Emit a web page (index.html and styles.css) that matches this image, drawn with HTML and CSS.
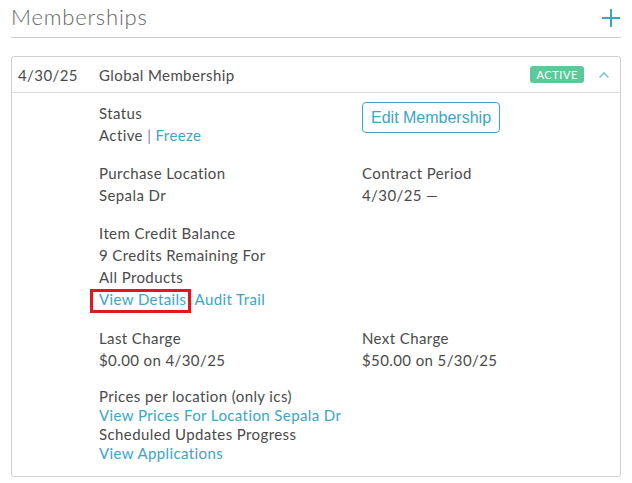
FILE: index.html
```html
<!DOCTYPE html>
<html>
<head>
<meta charset="utf-8">
<link rel="stylesheet" href="styles.css">
</head>
<body>
<div class="page">
  <div class="page-header">
    <h1 class="title">Memberships</h1>
    <svg class="add-icon" width="18" height="18" viewBox="0 0 18 18"><path d="M9 0V18M0 9H18" stroke="#3aa5c4" stroke-width="2"/></svg>
  </div>
  <div class="card">
    <div class="card-head">
      <span class="date">4/30/25</span>
      <span class="name">Global Membership</span>
      <span class="badge">ACTIVE</span>
      <svg class="chevron" width="12" height="8" viewBox="0 0 12 8"><path d="M1.5 6.5L6 2L10.5 6.5" fill="none" stroke="#7cc3da" stroke-width="1.6"/></svg>
    </div>
    <div class="card-body">
      <div class="grid">
        <div class="field">
          <div class="label">Status</div>
          <div class="value">Active <span class="sep">|</span> <a class="link">Freeze</a></div>
        </div>
        <div class="field">
          <button class="btn">Edit Membership</button>
        </div>
        <div class="field">
          <div class="label">Purchase Location</div>
          <div class="value">Sepala Dr</div>
        </div>
        <div class="field">
          <div class="label">Contract Period</div>
          <div class="value">4/30/25 —</div>
        </div>
        <div class="field">
          <div class="label">Item Credit Balance</div>
          <div class="value">9 Credits Remaining For All Products</div>
          <div class="value nowrap"><a class="link highlight">View Details</a> <a class="link audit">Audit Trail</a></div>
        </div>
        <div class="field"></div>
        <div class="field row-last">
          <div class="label">Last Charge</div>
          <div class="value">$0.00 on 4/30/25</div>
        </div>
        <div class="field row-last">
          <div class="label">Next Charge</div>
          <div class="value">$50.00 on 5/30/25</div>
        </div>
      </div>
      <div class="extra">
        <div class="label">Prices per location (only ics)</div>
        <div><a class="link">View Prices For Location Sepala Dr</a></div>
        <div class="label">Scheduled Updates Progress</div>
        <div><a class="link">View Applications</a></div>
      </div>
    </div>
  </div>
</div>
</body>
</html>
```
FILE: styles.css
```css
* { box-sizing: border-box; }
html, body { margin: 0; padding: 0; background: #fff; }
body {
  font-family: "Lato", "Open Sans", sans-serif;
  font-size: 15px;
  letter-spacing: 0.4px;
  color: #4a4a4a;
}
.page { padding: 0 11px; }
.page-header {
  display: flex;
  align-items: center;
  justify-content: space-between;
  height: 38px;
  border-bottom: 1px solid #cfcfcf;
}
.title {
  margin: 0;
  font-weight: 300;
  font-size: 22px;
  letter-spacing: 0.8px;
  color: #666;
  line-height: 30px;
  margin-top: -4px;
}
.add-icon { margin-right: 1px; margin-top: -2px; }
.card {
  margin-top: 18px;
  border: 1px solid #cfcfcf;
  border-radius: 3px;
}
.card-head {
  display: flex;
  align-items: center;
  height: 36px;
  padding: 0 10px 0 6px;
  border-bottom: 1px solid #dcdcdc;
}
.date { width: 81px; }
.name { flex: 1; }
.badge {
  background: #5cc99b;
  color: #fff;
  font-size: 11px;
  padding: 0 6px;
  height: 17px;
  line-height: 17px;
  border-radius: 3px;
  margin-right: 14px;
  letter-spacing: 0.6px;
}
.chevron { display: block; }
.card-body {
  padding: 9px 10px 13px 87px;
}
.grid {
  display: grid;
  grid-template-columns: 180px 1fr;
  column-gap: 83px;
  row-gap: 16px;
}
.field { line-height: 22px; }
.row-last { margin-top: 1px; }
.nowrap { white-space: nowrap; }
.label { color: #4a4a4a; }
.link { color: #3aa5c4; cursor: pointer; }
.audit { margin-left: 4px; }
.sep { color: #8a7aa0; }
.btn {
  font-family: "Liberation Sans", Arial, sans-serif;
  font-size: 16px;
  letter-spacing: 0;
  color: #3aa5c4;
  background: #fff;
  border: 1px solid #3aa5c4;
  border-radius: 4px;
  height: 31px;
  padding: 0 8px;
  display: block;
}
.highlight {
  position: relative;
}
.highlight::after {
  content: "";
  position: absolute;
  left: -9px;
  right: -5px;
  top: -1px;
  bottom: -5px;
  border: 3px solid #e3161e;
}
.extra {
  margin-top: 16px;
  line-height: 19px;
}
```
